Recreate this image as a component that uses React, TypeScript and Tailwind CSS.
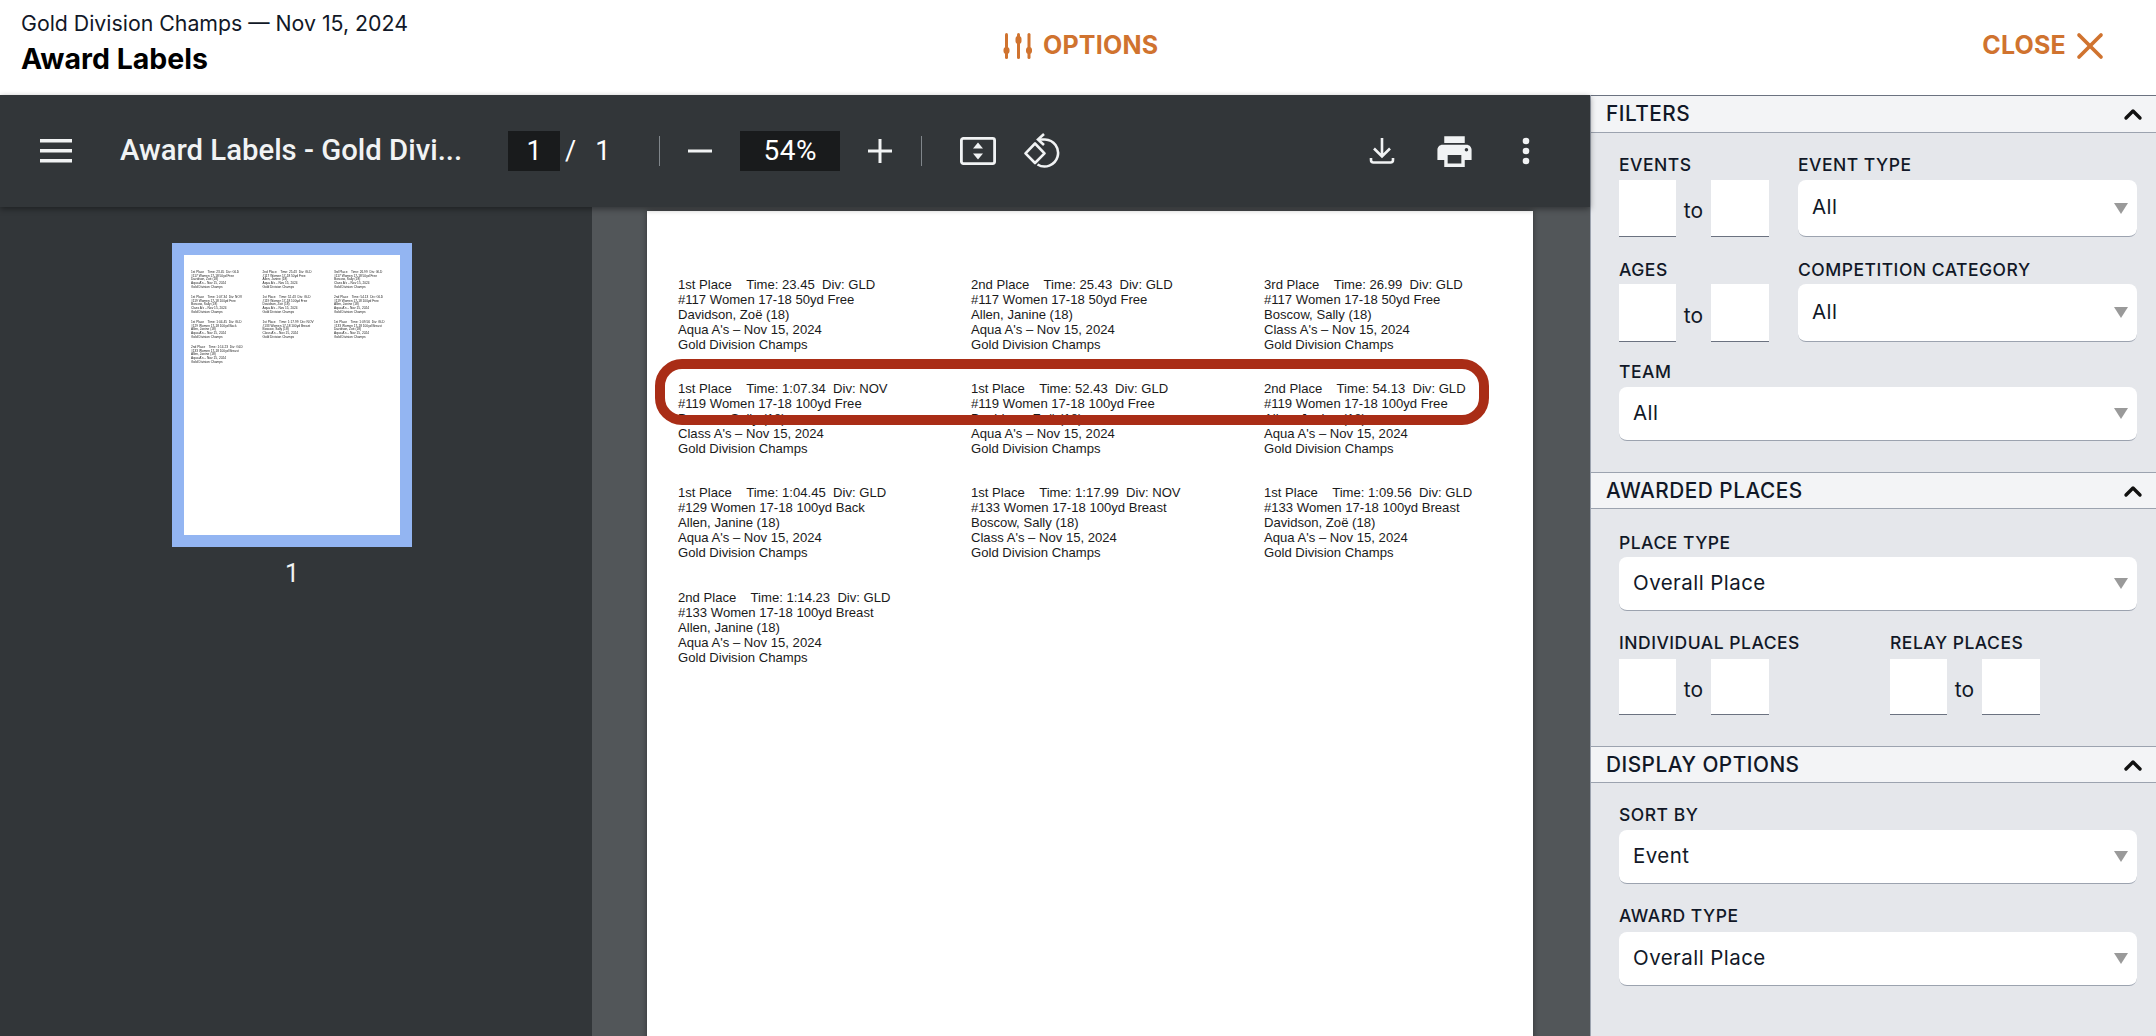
import React from 'react';
import { X } from 'lucide-react';

type Label = { place: string; time: string; div: string; event: string; name: string; team: string };

const labels: Label[] = [
  { place: '1st', time: '23.45', div: 'GLD', event: '#117 Women 17-18 50yd Free', name: 'Davidson, Zoë (18)', team: 'Aqua A\'s' },
  { place: '2nd', time: '25.43', div: 'GLD', event: '#117 Women 17-18 50yd Free', name: 'Allen, Janine (18)', team: 'Aqua A\'s' },
  { place: '3rd', time: '26.99', div: 'GLD', event: '#117 Women 17-18 50yd Free', name: 'Boscow, Sally (18)', team: 'Class A\'s' },
  { place: '1st', time: '1:07.34', div: 'NOV', event: '#119 Women 17-18 100yd Free', name: 'Boscow, Sally (18)', team: 'Class A\'s' },
  { place: '1st', time: '52.43', div: 'GLD', event: '#119 Women 17-18 100yd Free', name: 'Davidson, Zoë (18)', team: 'Aqua A\'s' },
  { place: '2nd', time: '54.13', div: 'GLD', event: '#119 Women 17-18 100yd Free', name: 'Allen, Janine (18)', team: 'Aqua A\'s' },
  { place: '1st', time: '1:04.45', div: 'GLD', event: '#129 Women 17-18 100yd Back', name: 'Allen, Janine (18)', team: 'Aqua A\'s' },
  { place: '1st', time: '1:17.99', div: 'NOV', event: '#133 Women 17-18 100yd Breast', name: 'Boscow, Sally (18)', team: 'Class A\'s' },
  { place: '1st', time: '1:09.56', div: 'GLD', event: '#133 Women 17-18 100yd Breast', name: 'Davidson, Zoë (18)', team: 'Aqua A\'s' },
  { place: '2nd', time: '1:14.23', div: 'GLD', event: '#133 Women 17-18 100yd Breast', name: 'Allen, Janine (18)', team: 'Aqua A\'s' },
];

const LabelText: React.FC<{ label: Label }> = ({ label }) => (
  <div className="whitespace-pre">
    <div>{`${label.place} Place    Time: ${label.time}  Div: ${label.div}`}</div>
    <div>{label.event}</div>
    <div>{label.name}</div>
    <div>{`${label.team} – Nov 15, 2024`}</div>
    <div>Gold Division Champs</div>
  </div>
);

const FieldLabel: React.FC<{ children: React.ReactNode }> = ({ children }) => (
  <div className="h-[16px] flex items-center text-[17.5px] font-medium tracking-[0.5px] text-[#111827] whitespace-nowrap">{children}</div>
);

const Select: React.FC<{ value: string; className: string }> = ({ value, className }) => (
  <div className={`flex items-center justify-between bg-white rounded-lg border-b border-[#9ca3af] pl-[14px] pr-[9px] text-[20.5px] tracking-[0.45px] text-[#111827] ${className}`}>
    <span className="-mt-[1px]">{value}</span>
    <span className="w-0 h-0 border-x-[7px] border-x-transparent border-t-[11px] border-t-[#9a9a9a]" />
  </div>
);

const Range: React.FC<{ height: string }> = ({ height }) => (
  <div className="flex items-center">
    <div className={`w-[57px] bg-white border-b border-[#6b7280] ${height}`} />
    <span className="w-[35px] text-center text-[21px] text-[#111827] pt-[5px]">to</span>
    <div className={`w-[58px] bg-white border-b border-[#6b7280] ${height}`} />
  </div>
);

const SectionHeader: React.FC<{ title: string; height: string }> = ({ title, height }) => (
  <div className={`flex items-center justify-between bg-[#f3f4f6] border-y border-[#9ca3af] pl-[15px] pr-[11px] ${height}`}>
    <span className="text-[20.8px] font-medium tracking-[0.5px] text-[#111827]">{title}</span>
    <svg width="24" height="16" viewBox="0 0 24 16" fill="none" stroke="#111" strokeWidth="3.4" strokeLinecap="round" strokeLinejoin="round">
      <path d="M5 12 L12 5 L19 12" />
    </svg>
  </div>
);

export default function App() {
  return (
    <div className="h-[1036px] w-[2156px] flex flex-col overflow-hidden bg-white font-['Inter',sans-serif]">
      {/* top bar */}
      <div className="h-[95px] shrink-0 grid grid-cols-[1003px_1fr_auto] items-center bg-white">
        <div className="pl-[21px] -mt-[8px]">
          <div className="text-[21.3px] leading-[26px] text-[#111827]">Gold Division Champs — Nov 15, 2024</div>
          <div className="text-[28.5px] leading-[36px] font-bold text-black mt-[5px]">Award Labels</div>
        </div>
        <div className="flex items-center text-[#d0732f] -mt-[3px]">
          <svg width="30" height="26" viewBox="0 0 30 26" fill="currentColor">
            <rect x="2" y="0" width="3" height="26" rx="1.5" />
            <rect x="0.5" y="14" width="6" height="7" rx="3" />
            <rect x="14" y="0" width="3" height="26" rx="1.5" />
            <rect x="12.5" y="3" width="6" height="8" rx="3" />
            <rect x="24.5" y="0" width="3" height="26" rx="1.5" />
            <rect x="23" y="14" width="6" height="7" rx="3" />
          </svg>
          <span className="ml-[10px] text-[25px] font-bold tracking-[0.2px]">OPTIONS</span>
        </div>
        <div className="flex items-center pr-[44px] text-[#d0732f] -mt-[3px]">
          <span className="text-[25px] font-bold tracking-[0.2px]">CLOSE</span>
          <X size={44} strokeWidth={2} className="ml-[2px]" />
        </div>
      </div>

      <div className="flex flex-1 min-h-0">
        {/* pdf viewer */}
        <div className="w-[1590px] shrink-0 flex flex-col bg-[#525659]">
          <div className="relative z-10 h-[112px] shrink-0 flex items-center bg-[#323639] text-white shadow-[0_2px_6px_rgba(0,0,0,0.4)] font-['Roboto',sans-serif]">
            <svg width="32" height="24" viewBox="0 0 32 24" fill="#f1f3f4" className="ml-[40px]">
              <rect y="0" width="32" height="3.5" />
              <rect y="10" width="32" height="3.5" />
              <rect y="20" width="32" height="3.5" />
            </svg>
            <span className="ml-[48px] w-[344px] text-[29.3px] font-medium whitespace-nowrap text-[#f1f3f4]">Award Labels - Gold Divi...</span>
            <span className="ml-[44px] w-[52px] h-[40px] flex items-center justify-center bg-[#191b1c] text-[27px]">1</span>
            <span className="ml-[5px] text-[27px]">/</span>
            <span className="ml-[19px] text-[27px]">1</span>
            <span className="ml-[49px] w-px h-[30px] bg-[#80868b]" />
            <svg width="26" height="26" viewBox="0 0 26 26" fill="#f1f3f4" className="ml-[27px]">
              <rect x="1" y="11.5" width="24" height="3" />
            </svg>
            <span className="ml-[27px] w-[100px] h-[40px] flex items-center justify-center bg-[#191b1c] text-[28px] tracking-[0.5px]">54%</span>
            <svg width="26" height="26" viewBox="0 0 26 26" fill="#f1f3f4" className="ml-[27px]">
              <rect x="1" y="11.5" width="24" height="3" />
              <rect x="11.5" y="1" width="3" height="24" />
            </svg>
            <span className="ml-[28px] w-px h-[30px] bg-[#80868b]" />
            <svg width="36" height="28" viewBox="0 0 36 28" fill="none" className="ml-[38px]">
              <rect x="1.4" y="1.4" width="33.2" height="25.2" rx="2" stroke="#f1f3f4" strokeWidth="2.8" />
              <path d="M18 5.5 L23 11.5 H13 Z M18 22.5 L23 16.5 H13 Z" fill="#f1f3f4" />
            </svg>
            <svg width="36" height="36" viewBox="0 0 36 36" fill="none" stroke="#f1f3f4" strokeWidth="2.6" className="ml-[28px]">
              <path d="M11 10.5 L1.5 20.3 L11 30 L20.5 20.3 Z" strokeLinejoin="round" />
              <path d="M14 6.5 H21 A13.5 13.5 0 1 1 13.5 31.5" />
              <path d="M20 1 L14 6.5 L20 12" />
            </svg>
            <svg width="26" height="28" viewBox="0 0 26 28" fill="none" stroke="#f1f3f4" strokeWidth="2.6" className="ml-[309px]">
              <path d="M13 1 V19 M5 11.5 L13 19.5 L21 11.5" />
              <path d="M2 21 V23 A2.5 2.5 0 0 0 4.5 25.5 H21.5 A2.5 2.5 0 0 0 24 23 V21" />
            </svg>
            <svg width="41" height="41" viewBox="0 0 24 24" fill="#f1f3f4" className="ml-[39px]">
              <path d="M19 8H5c-1.66 0-3 1.34-3 3v6h4v4h12v-4h4v-6c0-1.66-1.34-3-3-3zm-3 11H8v-5h8v5zm3-7c-.55 0-1-.45-1-1s.45-1 1-1 1 .45 1 1-.45 1-1 1zm-1-9H6v4h12V3z" />
            </svg>
            <svg width="8" height="28" viewBox="0 0 8 28" fill="#f1f3f4" className="ml-[47px]">
              <circle cx="4" cy="4" r="3.3" />
              <circle cx="4" cy="14" r="3.3" />
              <circle cx="4" cy="24" r="3.3" />
            </svg>
          </div>

          <div className="flex flex-1 min-h-0">
            {/* thumbnails */}
            <div className="w-[592px] shrink-0 bg-[#323639] flex flex-col pl-[172px] pt-[36px]">
              <div className="w-[240px] h-[304px] border-[12px] border-[#93b5f2] bg-white text-[3.2px] leading-[3.7px] text-[#222] font-['Liberation_Sans',sans-serif] pl-[7px] pt-[16px]">
                <div className="grid grid-cols-[71.5px_71.5px_71.5px] auto-rows-[25px] blur-[0.3px]">
                  {labels.map((label, i) => (
                    <LabelText key={i} label={label} />
                  ))}
                </div>
              </div>
              <div className="w-[240px] text-center text-[25px] text-[#f1f3f4] font-['Roboto',sans-serif] mt-[8px]">1</div>
            </div>

            {/* page */}
            <div className="flex-1 pl-[55px] pt-[4px] overflow-hidden">
              <div className="relative w-[886px] h-[900px] bg-white shadow-[0_0_6px_rgba(0,0,0,0.4)] pl-[31px] pt-[66px] text-[13.1px] leading-[15px] text-[#1a1a1a] font-['Liberation_Sans',sans-serif]">
                <div className="grid grid-cols-[293px_293px_293px] auto-rows-[104.2px]">
                  {labels.map((label, i) => (
                    <LabelText key={i} label={label} />
                  ))}
                </div>
                <div className="absolute left-[8px] top-[148px] w-[834px] h-[66px] rounded-[27px] border-[10px] border-[#a92d16]" />
              </div>
            </div>
          </div>
        </div>

        {/* options panel */}
        <div className="flex-1 flex flex-col bg-[#e5e7eb] border-l border-[#9ca3af]">
          <SectionHeader title="FILTERS" height="h-[38px] border-t-[#6b7280]" />
          <div className="pl-[28px] pr-[19px] h-[339px] pt-[24px]">
            <div className="grid grid-cols-[150px_1fr] gap-x-[29px]">
              <div>
                <FieldLabel>EVENTS</FieldLabel>
                <div className="mt-[7px]"><Range height="h-[57px]" /></div>
              </div>
              <div>
                <FieldLabel>EVENT TYPE</FieldLabel>
                <Select value="All" className="h-[57px] mt-[7px]" />
              </div>
              <div className="mt-[25px]">
                <FieldLabel>AGES</FieldLabel>
                <div className="mt-[6px]"><Range height="h-[58px]" /></div>
              </div>
              <div className="mt-[25px]">
                <FieldLabel>COMPETITION CATEGORY</FieldLabel>
                <Select value="All" className="h-[58px] mt-[6px]" />
              </div>
            </div>
            <div className="mt-[22px]">
              <FieldLabel>TEAM</FieldLabel>
              <Select value="All" className="h-[54px] mt-[7px]" />
            </div>
          </div>

          <SectionHeader title="AWARDED PLACES" height="h-[37px]" />
          <div className="pl-[28px] pr-[19px] h-[237px] pt-[26px]">
            <FieldLabel>PLACE TYPE</FieldLabel>
            <Select value="Overall Place" className="h-[54px] mt-[6px]" />
            <div className="flex mt-[24px]">
              <div className="w-[271px]">
                <FieldLabel>INDIVIDUAL PLACES</FieldLabel>
                <div className="mt-[8px]"><Range height="h-[56px]" /></div>
              </div>
              <div>
                <FieldLabel>RELAY PLACES</FieldLabel>
                <div className="mt-[8px]"><Range height="h-[56px]" /></div>
              </div>
            </div>
          </div>

          <SectionHeader title="DISPLAY OPTIONS" height="h-[37px]" />
          <div className="pl-[28px] pr-[19px] pt-[24px]">
            <FieldLabel>SORT BY</FieldLabel>
            <Select value="Event" className="h-[54px] mt-[7px]" />
            <div className="mt-[24px]">
              <FieldLabel>AWARD TYPE</FieldLabel>
              <Select value="Overall Place" className="h-[54px] mt-[8px]" />
            </div>
          </div>
        </div>
      </div>
    </div>
  );
}
